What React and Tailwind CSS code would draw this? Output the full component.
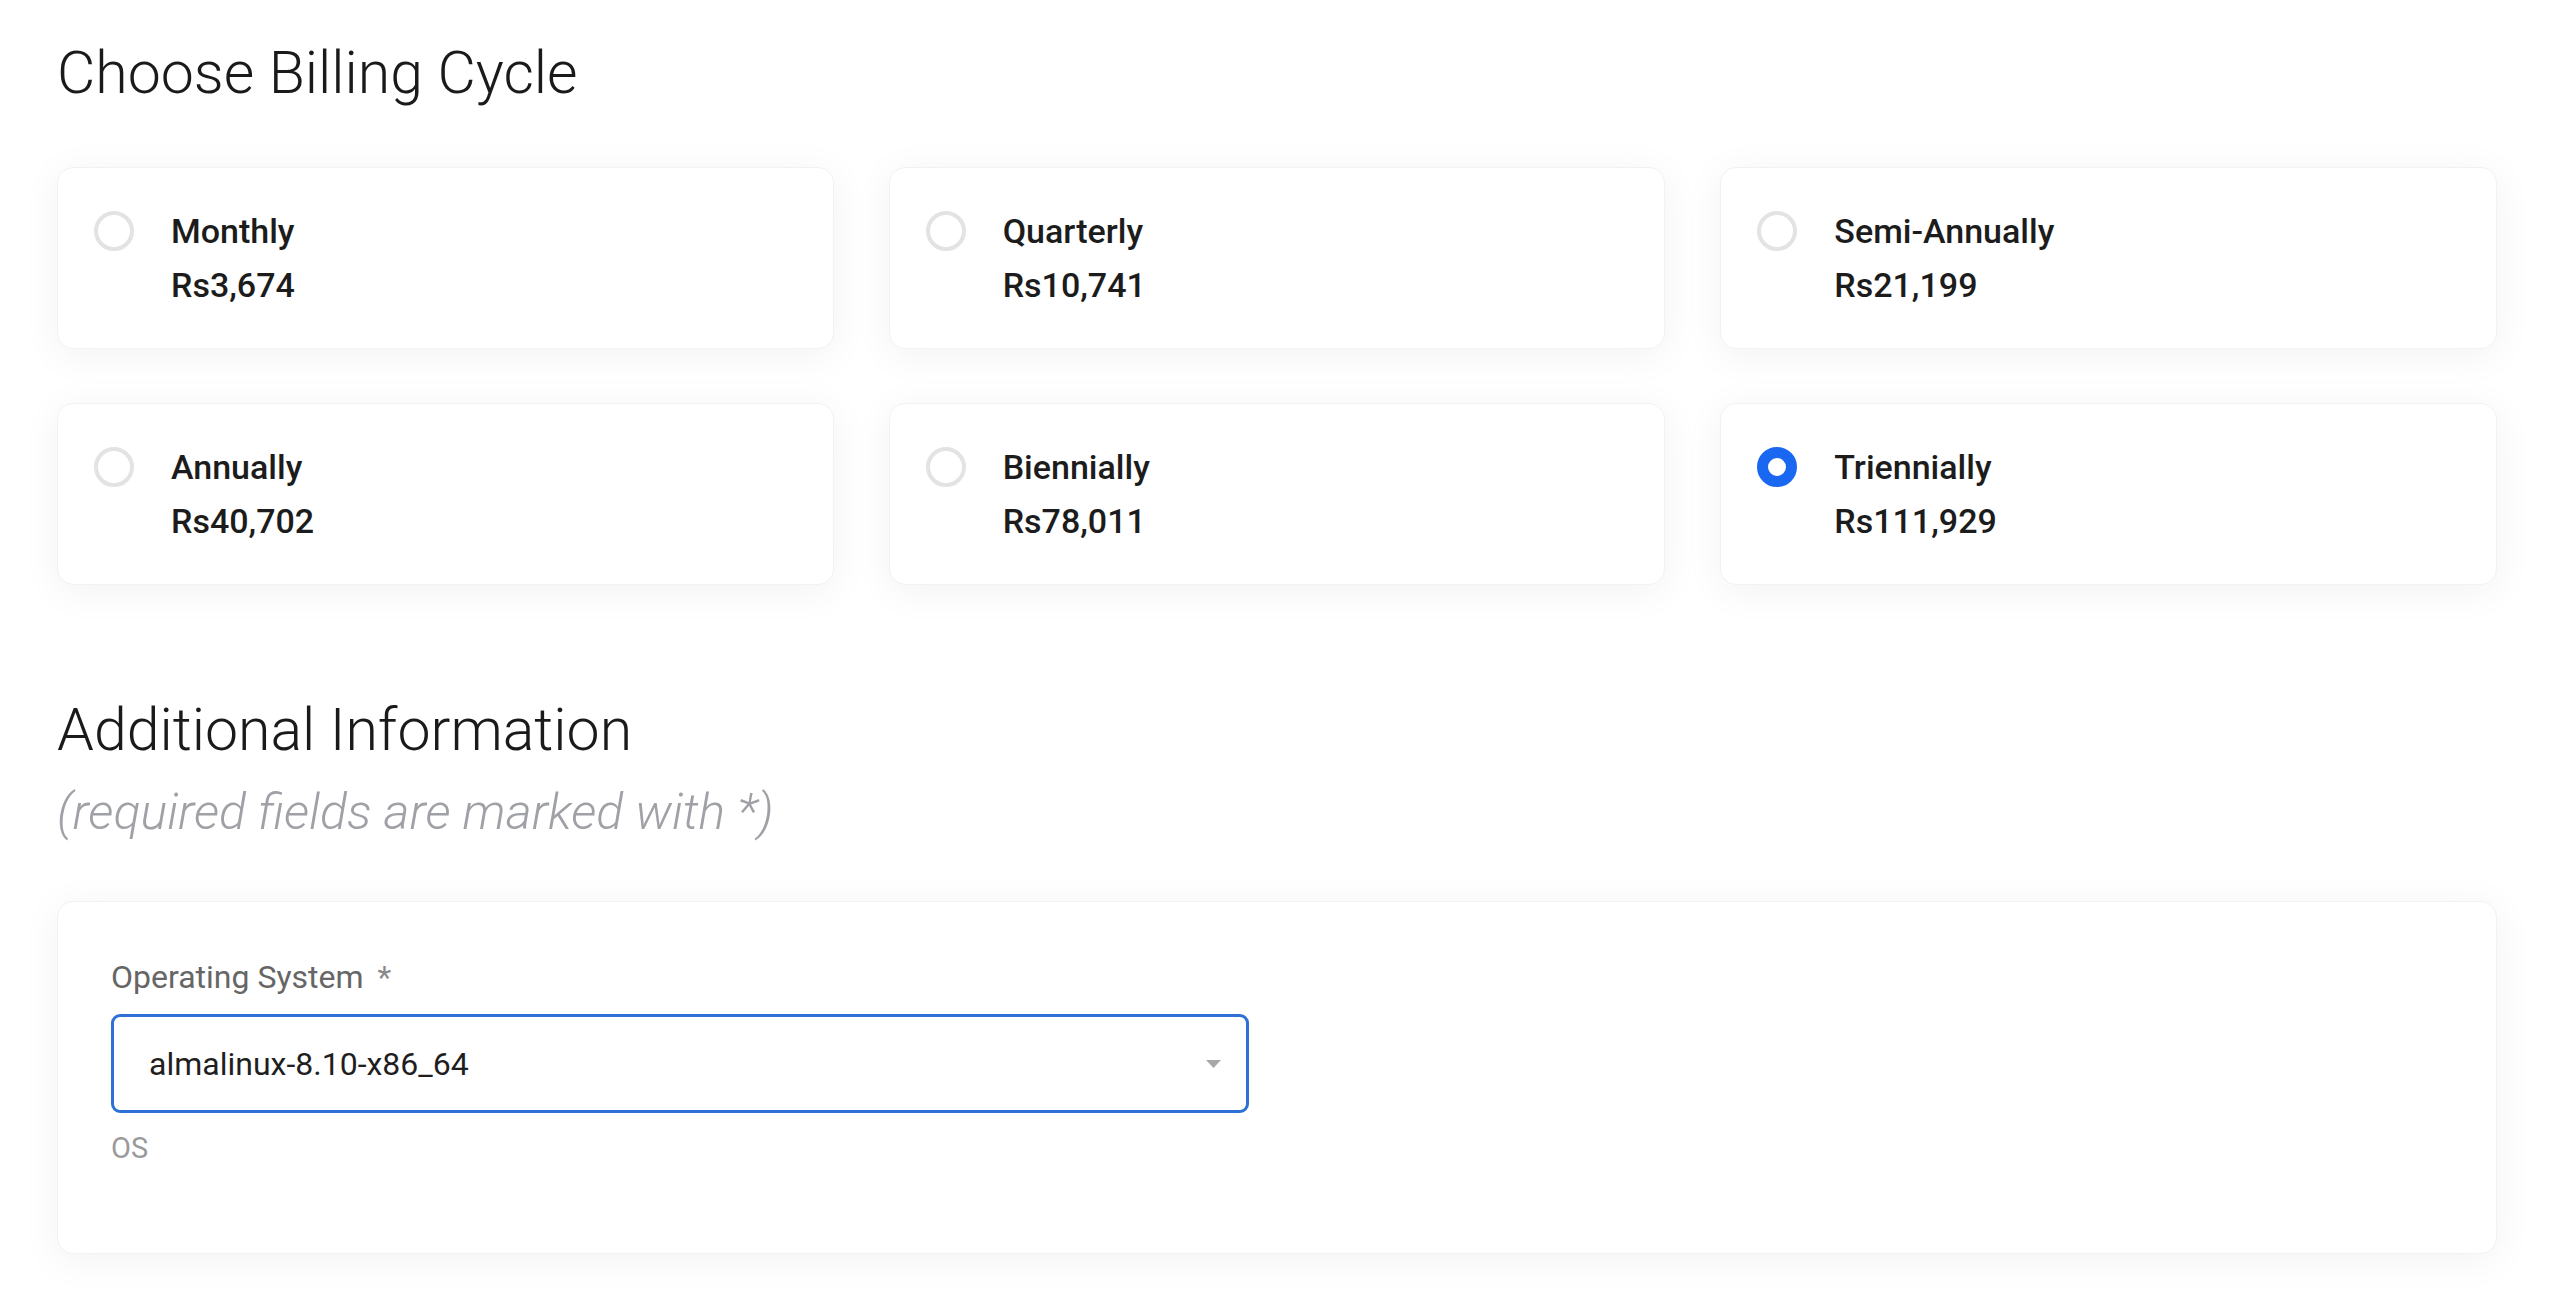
import React, { useState } from 'react';

const cycles = [
  { id: 'monthly', label: 'Monthly', price: 'Rs3,674' },
  { id: 'quarterly', label: 'Quarterly', price: 'Rs10,741' },
  { id: 'semiannually', label: 'Semi-Annually', price: 'Rs21,199' },
  { id: 'annually', label: 'Annually', price: 'Rs40,702' },
  { id: 'biennially', label: 'Biennially', price: 'Rs78,011' },
  { id: 'triennially', label: 'Triennially', price: 'Rs111,929' },
];

const cardShadow = 'shadow-[0_6px_40px_rgba(0,0,0,0.055)]';

function CycleCard({ cycle, selected, onSelect }) {
  return (
    <button
      type="button"
      onClick={() => onSelect(cycle.id)}
      className={`flex items-start text-left bg-white rounded-[16px] border border-[#f2f2f2] ${cardShadow} pl-[36px] py-[36px]`}
    >
      <div className="h-[54px] flex items-center">
        {selected ? (
          <span className="w-[40px] h-[40px] rounded-full border-[11px] border-[#1a68f2] bg-white" />
        ) : (
          <span className="w-[40px] h-[40px] rounded-full border-[4px] border-[#e3e3e3] bg-white" />
        )}
      </div>
      <div className="ml-[37px] flex flex-col text-[34px] leading-[54px] font-medium text-[#1c1c1c]">
        <span>{cycle.label}</span>
        <span>{cycle.price}</span>
      </div>
    </button>
  );
}

export default function App() {
  const [selected, setSelected] = useState('triennially');

  return (
    <div className="min-h-screen bg-white font-['Roboto',sans-serif] pl-[57px] pr-[63px] pt-[38px]">
      <h1 className="text-[59px] leading-[70px] font-light text-[#1a1a1a]">Choose Billing Cycle</h1>

      <div className="mt-[59px] grid grid-cols-3 gap-x-[55px] gap-y-[54px]">
        {cycles.map((c) => (
          <CycleCard key={c.id} cycle={c} selected={selected === c.id} onSelect={setSelected} />
        ))}
      </div>

      <h2 className="mt-[110px] text-[59px] leading-[70px] font-light text-[#1a1a1a]">Additional Information</h2>
      <p className="mt-[18px] text-[50px] leading-[58px] font-light italic text-[#9fa1a6]">
        (required fields are marked with *)
      </p>

      <div className={`mt-[60px] bg-white rounded-[16px] border border-[#f2f2f2] ${cardShadow} pl-[53px] pt-[55px] pb-[87px]`}>
        <label className="block text-[32px] leading-[40px] text-[#666666]">
          Operating System <span className="ml-[6px] text-[#8a8a8a]">*</span>
        </label>
        <div className="mt-[17px] w-[1138px] h-[99px] rounded-[9px] border-[3px] border-[#2f6fd8] flex items-center justify-between pl-[35px] pr-[25px]">
          <span className="text-[32px] text-[#1f1f1f]">almalinux-8.10-x86_64</span>
          <svg width="15" height="8" viewBox="0 0 15 8">
            <path d="M0 0 H15 L7.5 8 Z" fill="#a8a8a8" />
          </svg>
        </div>
        <div className="mt-[17px] text-[29px] leading-[36px] text-[#9a9a9a]">OS</div>
      </div>
    </div>
  );
}
